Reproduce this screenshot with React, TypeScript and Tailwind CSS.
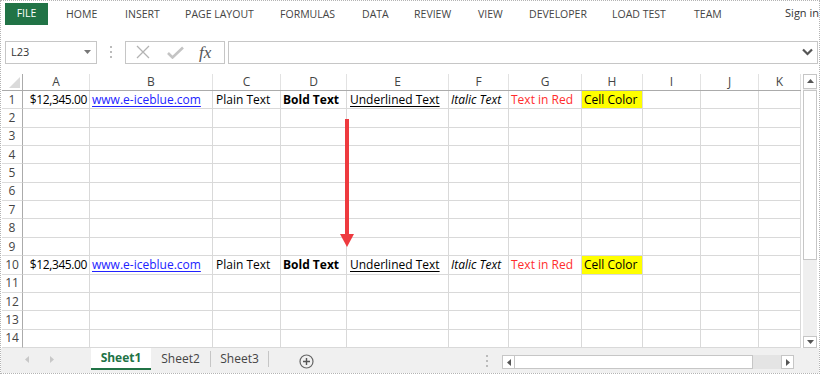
const cols = [
  { name: "A", w: "w-[67px]" },
  { name: "B", w: "w-[123px]" },
  { name: "C", w: "w-[68px]" },
  { name: "D", w: "w-[66px]" },
  { name: "E", w: "w-[102px]" },
  { name: "F", w: "w-[60px]" },
  { name: "G", w: "w-[73px]" },
  { name: "H", w: "w-[61px]" },
  { name: "I", w: "w-[58px]" },
  { name: "J", w: "w-[58px]" },
  { name: "K", w: "w-[42px]" },
];

const tabs = [
  { label: "HOME", w: "w-[59px]" },
  { label: "INSERT", w: "w-[60px]" },
  { label: "PAGE LAYOUT", w: "w-[95px]" },
  { label: "FORMULAS", w: "w-[82px]" },
  { label: "DATA", w: "w-[52px]" },
  { label: "REVIEW", w: "w-[64px]" },
  { label: "VIEW", w: "w-[51px]" },
  { label: "DEVELOPER", w: "w-[83px]" },
  { label: "LOAD TEST", w: "w-[82px]" },
  { label: "TEAM", w: "w-[91px]" },
];

function Cell({ idx }: { idx: number }) {
  switch (idx) {
    case 0:
      return (
        <div className="flex h-full items-center justify-end pr-[2px] text-[12px] tracking-[-0.4px] text-black">
          $12,345.00
        </div>
      );
    case 1:
      return (
        <div className="flex h-full items-center pl-[2px] text-[12px] text-[#2222ff] underline underline-offset-2">
          www.e-iceblue.com
        </div>
      );
    case 2:
      return <div className="flex h-full items-center pl-[3px] text-[12px] text-black">Plain Text</div>;
    case 3:
      return <div className="flex h-full items-center pl-[2px] text-[12px] font-bold text-black">Bold Text</div>;
    case 4:
      return (
        <div className="flex h-full items-center pl-[3px] text-[12px] text-black underline underline-offset-2">
          Underlined Text
        </div>
      );
    case 5:
      return <div className="flex h-full items-center pl-[2px] text-[12px] italic text-black">Italic Text</div>;
    case 6:
      return <div className="flex h-full items-center pl-[2px] text-[12px] text-[#ff2d2d]">Text in Red</div>;
    default:
      return <div className="flex h-full items-center bg-[#ffff00] pl-[2px] text-[12px] text-black">Cell Color</div>;
  }
}

function GridRow({ n }: { n: number }) {
  const filled = n === 1 || n === 10;
  return (
    <div className="flex h-[18.36px]">
      <div className="flex w-[21px] shrink-0 items-center justify-center border-r border-b border-r-[#ababab] border-b-[#dcdcdc] text-[12px] text-[#444]">
        {n}
      </div>
      {cols.map((c, i) => (
        <div
          key={c.name}
          className={`${c.w} shrink-0 whitespace-nowrap border-r border-b border-[#d9d9d9]`}
        >
          {filled && i < 8 ? <Cell idx={i} /> : null}
        </div>
      ))}
    </div>
  );
}

export default function App() {
  const rows = Array.from({ length: 14 }, (_, i) => i + 1);
  return (
    <div
      className="relative flex h-[374px] w-[820px] flex-col overflow-hidden border border-dotted border-[#b4b4b4] bg-white text-[12px] text-[#222]"
      style={{ fontFamily: '"Open Sans", "Liberation Sans", sans-serif' }}
    >
      {/* ribbon tabs */}
      <div className="flex h-[28px] items-start">
        <div className="ml-[4px] mt-[2px] flex h-[22px] w-[48px] items-center justify-center bg-[#217346] text-[10.5px] text-white">
          FILE
        </div>
        <div className="ml-[18px] mt-[6px] flex">
          {tabs.map((t) => (
            <div key={t.label} className={`${t.w} text-[10.5px] text-[#444]`}>
              {t.label}
            </div>
          ))}
          <div className="-mt-[2px] whitespace-nowrap text-[11px] text-[#333]">Sign in</div>
        </div>
      </div>

      {/* formula bar */}
      <div className="mt-[12px] flex h-[23px] items-stretch">
        <div className="ml-[4px] flex w-[92px] items-center justify-between border border-[#c6c6c6] pl-[5px] pr-[5px] text-[11px] text-[#333]">
          <span>L23</span>
          <svg width="7" height="4" viewBox="0 0 7 4">
            <path d="M0 0h7L3.5 4z" fill="#777" />
          </svg>
        </div>
        <div className="flex w-[28px] items-center justify-center">
          <svg width="2" height="12" viewBox="0 0 2 12">
            <rect x="0" y="0" width="2" height="2" fill="#bbb" />
            <rect x="0" y="5" width="2" height="2" fill="#bbb" />
            <rect x="0" y="10" width="2" height="2" fill="#bbb" />
          </svg>
        </div>
        <div className="flex w-[100px] items-center border border-[#c6c6c6]">
          <svg className="ml-[10px]" width="14" height="14" viewBox="0 0 14 14">
            <path d="M1 1l12 12M13 1L1 13" stroke="#b3b3b3" strokeWidth="1.3" />
          </svg>
          <svg className="ml-[17px]" width="17" height="13" viewBox="0 0 17 13">
            <path d="M1 7l4.5 4.5L16 1.5" stroke="#c4c4c4" strokeWidth="2.6" fill="none" />
          </svg>
          <span
            className="ml-[15px] text-[17px] italic leading-none text-[#555]"
            style={{ fontFamily: '"Liberation Serif", serif' }}
          >
            fx
          </span>
        </div>
        <div className="ml-[3px] mr-[1px] flex flex-1 items-center justify-end border border-[#c6c6c6] pr-[4px]">
          <svg width="11" height="8" viewBox="0 0 11 8">
            <path d="M1 1.5l4.5 4.5L10 1.5" stroke="#555" strokeWidth="2.2" fill="none" />
          </svg>
        </div>
      </div>

      {/* sheet grid */}
      <div className="mt-[10px] flex">
        <div className="ml-px flex flex-col">
          <div className="flex h-[17px] border-b border-[#ababab]">
            <div className="flex w-[21px] items-end justify-end border-r border-[#ababab] pb-[2px] pr-[2px]">
              <svg width="11" height="11" viewBox="0 0 11 11">
                <path d="M11 0V11H0z" fill="#dadada" />
              </svg>
            </div>
            {cols.map((c) => (
              <div
                key={c.name}
                className={`${c.w} flex items-center justify-center border-r border-[#e2e2e2] text-[12px] text-[#444]`}
              >
                {c.name}
              </div>
            ))}
          </div>
          {rows.map((n) => (
            <GridRow key={n} n={n} />
          ))}
        </div>

        {/* vertical scrollbar */}
        <div className="ml-[2px] flex w-[14px] flex-col bg-[#efefef]">
          <div className="flex h-[15px] items-center justify-center border border-[#c6c6c6] bg-white">
            <svg width="7" height="4" viewBox="0 0 7 4">
              <path d="M0 4h7L3.5 0z" fill="#555" />
            </svg>
          </div>
          <div className="mt-[1px] h-[170px] border border-[#c6c6c6] bg-white" />
          <div className="flex-1" />
          <div className="flex h-[12px] items-center justify-center border border-[#c6c6c6] bg-white">
            <svg width="7" height="4" viewBox="0 0 7 4">
              <path d="M0 0h7L3.5 4z" fill="#555" />
            </svg>
          </div>
        </div>
      </div>

      {/* sheet tabs */}
      <div className="flex h-[25px] items-start bg-[#f0f0f0]">
        <div className="flex h-[22px] w-[90px] items-center">
          <svg className="ml-[24px]" width="4" height="7" viewBox="0 0 4 7">
            <path d="M4 0v7L0 3.5z" fill="#c8c8c8" />
          </svg>
          <svg className="ml-[21px]" width="4" height="7" viewBox="0 0 4 7">
            <path d="M0 0v7l4-3.5z" fill="#c8c8c8" />
          </svg>
        </div>
        <div className="flex h-[22px] w-[60px] items-center justify-center border-b-2 border-[#217346] bg-white text-[12px] font-bold text-[#217346]">
          Sheet1
        </div>
        <div className="flex h-[22px] w-[59px] items-center justify-center text-[12px] text-[#444]">
          Sheet2
        </div>
        <div className="mt-[3px] h-[16px] w-px bg-[#c6c6c6]" />
        <div className="flex h-[22px] w-[57px] items-center justify-center text-[12px] text-[#444]">
          Sheet3
        </div>
        <div className="mt-[3px] h-[16px] w-px bg-[#c6c6c6]" />
        <div className="flex h-[26px] w-[74px] items-center justify-center">
          <svg width="15" height="15" viewBox="0 0 15 15">
            <circle cx="7.5" cy="7.5" r="6.5" stroke="#666" strokeWidth="1.2" fill="none" />
            <path d="M7.5 4v7M4 7.5h7" stroke="#555" strokeWidth="1.4" />
          </svg>
        </div>
        <div className="ml-[143px] flex h-[26px] w-[3px] items-center">
          <svg width="2" height="12" viewBox="0 0 2 12">
            <rect x="0" y="0" width="2" height="2" fill="#bbb" />
            <rect x="0" y="5" width="2" height="2" fill="#bbb" />
            <rect x="0" y="10" width="2" height="2" fill="#bbb" />
          </svg>
        </div>
        {/* horizontal scrollbar */}
        <div className="ml-[13px] mt-[7px] flex h-[14px] w-[292px]">
          <div className="flex w-[13px] items-center justify-center border border-[#c6c6c6] bg-white">
            <svg width="4" height="7" viewBox="0 0 4 7">
              <path d="M4 0v7L0 3.5z" fill="#555" />
            </svg>
          </div>
          <div className="w-[238px] border border-l-0 border-[#c6c6c6] bg-white" />
          <div className="flex-1 bg-[#e4e4e4]" />
          <div className="flex w-[13px] items-center justify-center border border-[#c6c6c6] bg-white">
            <svg width="4" height="7" viewBox="0 0 4 7">
              <path d="M0 0v7l4-3.5z" fill="#555" />
            </svg>
          </div>
        </div>
      </div>

      {/* annotation arrow */}
      <svg className="pointer-events-none absolute left-[337px] top-[116px]" width="18" height="134" viewBox="0 0 18 134">
        <path d="M9 2V118" stroke="#ee3a3f" strokeWidth="4" />
        <path d="M2 117h14L9 130z" fill="#ee3a3f" />
      </svg>
    </div>
  );
}
